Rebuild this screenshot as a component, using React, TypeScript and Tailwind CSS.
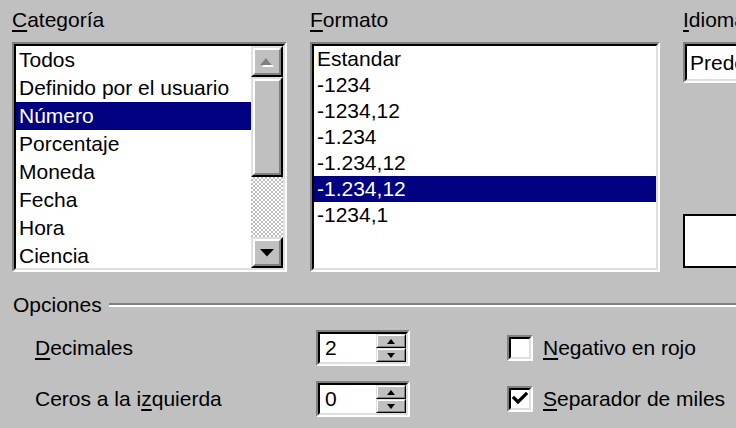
import React from "react";

function Sunken({ className = "", innerClassName = "", children }: { className?: string; innerClassName?: string; children?: React.ReactNode }) {
  return (
    <div className={"border-2 border-t-[#808080] border-l-[#808080] border-b-white border-r-white " + className}>
      <div className={"h-full w-full border-2 border-t-black border-l-black border-b-[#dfdfdf] border-r-[#dfdfdf] " + innerClassName}>
        {children}
      </div>
    </div>
  );
}

function Raised({ className = "", children }: { className?: string; children?: React.ReactNode }) {
  return (
    <div className={"border-2 border-t-[#dfdfdf] border-l-[#dfdfdf] border-b-black border-r-black bg-[#c0c0c0] " + className}>
      <div className="h-full w-full border-2 border-t-white border-l-white border-b-[#808080] border-r-[#808080] flex items-center justify-center">
        {children}
      </div>
    </div>
  );
}

function SmallRaised({ className = "", children }: { className?: string; children?: React.ReactNode }) {
  return (
    <div className={"border border-t-[#dfdfdf] border-l-[#dfdfdf] border-b-black border-r-black bg-[#c0c0c0] " + className}>
      <div className="h-full w-full border border-t-white border-l-white border-b-[#808080] border-r-[#808080] flex items-center justify-center">
        {children}
      </div>
    </div>
  );
}

function U({ children }: { children: React.ReactNode }) {
  return <span className="underline decoration-2 underline-offset-[3px]">{children}</span>;
}

const categorias = ["Todos", "Definido por el usuario", "Número", "Porcentaje", "Moneda", "Fecha", "Hora", "Ciencia"];
const formatos = ["Estandar", "-1234", "-1234,12", "-1.234", "-1.234,12", "-1.234,12", "-1234,1"];

function Spin({ value }: { value: string }) {
  return (
    <Sunken className="w-[94px] h-[36px] shrink-0" innerClassName="bg-white flex">
      <div className="flex-1 pl-[5px] leading-[28px]">{value}</div>
      <div className="w-[30px] flex flex-col">
        <SmallRaised className="h-[14px]">
          <svg width="8" height="5" viewBox="0 0 8 5"><polygon points="0,5 4,0 8,5" fill="black" /></svg>
        </SmallRaised>
        <SmallRaised className="h-[14px]">
          <svg width="8" height="5" viewBox="0 0 8 5"><polygon points="0,0 8,0 4,5" fill="black" /></svg>
        </SmallRaised>
      </div>
    </Sunken>
  );
}

function Check({ checked }: { checked: boolean }) {
  return (
    <Sunken className="w-[26px] h-[26px] shrink-0" innerClassName="bg-white flex items-center justify-center">
      {checked && (
        <svg width="16" height="14" viewBox="0 0 16 14">
          <path d="M2 6 L6 10 L14 2" stroke="black" strokeWidth="3.2" fill="none" strokeLinecap="square" />
        </svg>
      )}
    </Sunken>
  );
}

export default function App() {
  return (
    <div className="w-[736px] h-[428px] overflow-hidden bg-[#c0c0c0] text-black text-[21px] font-['Liberation_Sans',Arial,sans-serif] flex flex-col">
      <div className="flex pt-[8px]">
        {/* Categoría */}
        <div className="ml-[12px] w-[275px] shrink-0">
          <div className="h-[24px] leading-[24px]"><U>C</U>ategoría</div>
          <Sunken className="mt-[10px] h-[230px] w-[275px]" innerClassName="bg-white flex overflow-hidden">
            <div className="flex-1 overflow-hidden">
              {categorias.map((c, i) => (
                <div key={c} className={"h-[28px] leading-[28px] pl-[3px] whitespace-nowrap " + (i === 2 ? "bg-[#000080] text-white" : "")}>
                  {c}
                </div>
              ))}
            </div>
            <div className="w-[32px] flex flex-col shrink-0">
              <Raised className="h-[31px]">
                <svg width="16" height="10" viewBox="0 0 16 10">
                  <polygon points="3,10 9,3 15,10" fill="white" />
                  <polygon points="1,8 7,1 13,8" fill="#808080" />
                </svg>
              </Raised>
              <Raised className="h-[100px]" />
              <div className="flex-1 bg-[image:repeating-conic-gradient(#c0c0c0_0%_25%,#ffffff_0%_50%)] bg-[length:4px_4px]" />
              <Raised className="h-[31px]">
                <svg width="14" height="8" viewBox="0 0 14 8">
                  <polygon points="0,0 14,0 7,7.5" fill="black" />
                </svg>
              </Raised>
            </div>
          </Sunken>
        </div>
        {/* Formato */}
        <div className="ml-[23px] w-[350px] shrink-0">
          <div className="h-[24px] leading-[24px]"><U>F</U>ormato</div>
          <Sunken className="mt-[10px] h-[230px] w-[350px]" innerClassName="bg-white overflow-hidden">
            {formatos.map((f, i) => (
              <div key={i} className={"h-[26px] leading-[26px] pl-[3px] whitespace-nowrap " + (i === 5 ? "bg-[#000080] text-white" : "")}>
                {f}
              </div>
            ))}
          </Sunken>
        </div>
        {/* Idioma */}
        <div className="ml-[23px] w-[200px] shrink-0">
          <div className="h-[24px] leading-[24px] whitespace-nowrap"><U>I</U>dioma</div>
          <Sunken className="mt-[10px] h-[41px] w-[200px]" innerClassName="bg-white overflow-hidden">
            <div className="pl-[3px] leading-[33px] whitespace-nowrap">Predeterminado</div>
          </Sunken>
          <div className="mt-[131px] h-[54px] w-[200px] border-2 border-black bg-white" />
        </div>
      </div>

      {/* Opciones */}
      <div className="mt-[19px] h-[28px] flex items-center pl-[13px]">
        <span className="leading-[28px]">Opciones</span>
        <div className="ml-[7px] flex-1 h-[4px] border-t-2 border-t-[#808080] border-b-2 border-b-white" />
      </div>

      <div className="mt-[11px] flex items-center h-[36px]">
        <div className="w-[316px] pl-[35px] shrink-0 whitespace-nowrap"><U>D</U>ecimales</div>
        <Spin value="2" />
        <div className="ml-[97px] flex items-center">
          <Check checked={false} />
          <span className="ml-[10px] whitespace-nowrap"><U>N</U>egativo en rojo</span>
        </div>
      </div>

      <div className="mt-[15px] flex items-center h-[36px]">
        <div className="w-[316px] pl-[35px] shrink-0 whitespace-nowrap">Ceros a la i<U>z</U>quierda</div>
        <Spin value="0" />
        <div className="ml-[97px] flex items-center">
          <Check checked={true} />
          <span className="ml-[10px] whitespace-nowrap"><U>S</U>eparador de miles</span>
        </div>
      </div>
    </div>
  );
}
